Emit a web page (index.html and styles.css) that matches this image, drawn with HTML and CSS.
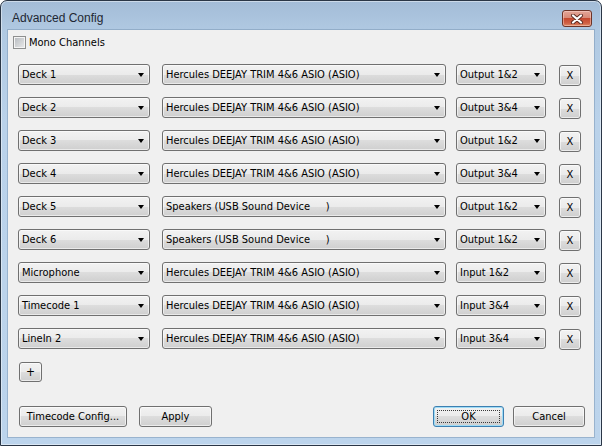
FILE: index.html
```html
<!DOCTYPE html>
<html lang="en">
<head>
    <meta charset="UTF-8">
    <title>Advanced Config</title>
    <link rel="stylesheet" href="styles.css">
</head>
<body>
    <div class="window">
        <div class="titlebar">
            <div class="title">Advanced Config</div>
            <div class="close-btn">
                <svg width="14" height="10" viewBox="0 0 14 10">
                    <path d="M3 1.5 L11 8.5 M11 1.5 L3 8.5" stroke="#5a2a22" stroke-width="4" stroke-linecap="round"/>
                    <path d="M3 1.5 L11 8.5 M11 1.5 L3 8.5" stroke="#ffffff" stroke-width="2.2" stroke-linecap="round"/>
                </svg>
            </div>
        </div>

        <div class="client">
            <label class="check-row">
                <span class="checkbox"></span>
                <span>Mono Channels</span>
            </label>

            <div class="rows">
                <div class="row">
                    <div class="combo combo-name"><span>Deck 1</span><i class="arrow"></i></div>
                    <div class="combo combo-device"><span>Hercules DEEJAY TRIM 4&amp;6 ASIO (ASIO)</span><i class="arrow"></i></div>
                    <div class="combo combo-channel"><span>Output 1&amp;2</span><i class="arrow"></i></div>
                    <div class="btn btn-x">X</div>
                </div>
                <div class="row">
                    <div class="combo combo-name"><span>Deck 2</span><i class="arrow"></i></div>
                    <div class="combo combo-device"><span>Hercules DEEJAY TRIM 4&amp;6 ASIO (ASIO)</span><i class="arrow"></i></div>
                    <div class="combo combo-channel"><span>Output 3&amp;4</span><i class="arrow"></i></div>
                    <div class="btn btn-x">X</div>
                </div>
                <div class="row">
                    <div class="combo combo-name"><span>Deck 3</span><i class="arrow"></i></div>
                    <div class="combo combo-device"><span>Hercules DEEJAY TRIM 4&amp;6 ASIO (ASIO)</span><i class="arrow"></i></div>
                    <div class="combo combo-channel"><span>Output 1&amp;2</span><i class="arrow"></i></div>
                    <div class="btn btn-x">X</div>
                </div>
                <div class="row">
                    <div class="combo combo-name"><span>Deck 4</span><i class="arrow"></i></div>
                    <div class="combo combo-device"><span>Hercules DEEJAY TRIM 4&amp;6 ASIO (ASIO)</span><i class="arrow"></i></div>
                    <div class="combo combo-channel"><span>Output 3&amp;4</span><i class="arrow"></i></div>
                    <div class="btn btn-x">X</div>
                </div>
                <div class="row">
                    <div class="combo combo-name"><span>Deck 5</span><i class="arrow"></i></div>
                    <div class="combo combo-device"><span>Speakers (USB Sound Device     )</span><i class="arrow"></i></div>
                    <div class="combo combo-channel"><span>Output 1&amp;2</span><i class="arrow"></i></div>
                    <div class="btn btn-x">X</div>
                </div>
                <div class="row">
                    <div class="combo combo-name"><span>Deck 6</span><i class="arrow"></i></div>
                    <div class="combo combo-device"><span>Speakers (USB Sound Device     )</span><i class="arrow"></i></div>
                    <div class="combo combo-channel"><span>Output 1&amp;2</span><i class="arrow"></i></div>
                    <div class="btn btn-x">X</div>
                </div>
                <div class="row">
                    <div class="combo combo-name"><span>Microphone</span><i class="arrow"></i></div>
                    <div class="combo combo-device"><span>Hercules DEEJAY TRIM 4&amp;6 ASIO (ASIO)</span><i class="arrow"></i></div>
                    <div class="combo combo-channel"><span>Input 1&amp;2</span><i class="arrow"></i></div>
                    <div class="btn btn-x">X</div>
                </div>
                <div class="row">
                    <div class="combo combo-name"><span>Timecode 1</span><i class="arrow"></i></div>
                    <div class="combo combo-device"><span>Hercules DEEJAY TRIM 4&amp;6 ASIO (ASIO)</span><i class="arrow"></i></div>
                    <div class="combo combo-channel"><span>Input 3&amp;4</span><i class="arrow"></i></div>
                    <div class="btn btn-x">X</div>
                </div>
                <div class="row">
                    <div class="combo combo-name"><span>LineIn 2</span><i class="arrow"></i></div>
                    <div class="combo combo-device"><span>Hercules DEEJAY TRIM 4&amp;6 ASIO (ASIO)</span><i class="arrow"></i></div>
                    <div class="combo combo-channel"><span>Input 3&amp;4</span><i class="arrow"></i></div>
                    <div class="btn btn-x">X</div>
                </div>
            </div>

            <div class="btn btn-add">+</div>

            <div class="footer">
                <div class="footer-group">
                    <div class="btn btn-timecode">Timecode Config...</div>
                    <div class="btn btn-apply">Apply</div>
                </div>
                <div class="footer-group footer-right">
                    <div class="btn btn-ok">OK</div>
                    <div class="btn btn-cancel">Cancel</div>
                </div>
            </div>
        </div>
    </div>
</body>
</html>
```

FILE: styles.css
```css
* {
    margin: 0;
    padding: 0;
    box-sizing: border-box;
}

body {
    width: 602px;
    height: 446px;
    overflow: hidden;
    background: #ffffff;
    font-family: 'DejaVu Sans Condensed', 'Liberation Sans', sans-serif;
    font-stretch: condensed;
    font-size: 11px;
    color: #000000;
}

/* window frame */
.window {
    width: 602px;
    height: 446px;
    display: flex;
    flex-direction: column;
    border: 1px solid #2a3646;
    border-radius: 7px 7px 0 0;
    background: linear-gradient(#a3bcd7 0, #b0c9e2 30px, #bad2ea 120px, #bcd4ec 100%);
    box-shadow: inset 0 0 0 1px rgba(255, 255, 255, 0.45);
}

.titlebar {
    height: 29px;
    display: flex;
    align-items: flex-start;
    justify-content: space-between;
    padding: 9px 9px 0 11px;
}

.title {
    font-family: 'Liberation Sans', Arial, sans-serif;
    font-stretch: normal;
    font-size: 12px;
    line-height: 17px;
    color: #1e2733;
}

.close-btn {
    width: 30px;
    height: 17px;
    display: flex;
    align-items: center;
    justify-content: center;
    border: 1px solid #6c3327;
    border-radius: 3px;
    background: linear-gradient(#e3a597 0, #d88a78 45%, #c5492f 50%, #cf5f43 80%, #dd8a66 100%);
    box-shadow: inset 0 0 0 1px rgba(255, 225, 215, 0.45);
}

/* client area */
.client {
    flex: 1;
    margin: 0 7px 8px 7px;
    background: #f0f0f0;
    box-shadow: 0 0 0 1px rgba(110, 140, 170, 0.45);
    display: flex;
    flex-direction: column;
    padding-top: 6px;
}

.check-row {
    display: flex;
    align-items: center;
    gap: 3px;
    padding-left: 5px;
    height: 13px;
}

.checkbox {
    width: 13px;
    height: 13px;
    border: 1px solid #8e8f8f;
    background: linear-gradient(135deg, #b5b9be, #ebebeb);
    box-shadow: inset 0 0 0 1px #f4f4f4;
}

.rows {
    display: flex;
    flex-direction: column;
    gap: 12px;
    margin-top: 15px;
    padding-left: 10px;
}

.row {
    display: flex;
    align-items: flex-start;
    height: 21px;
}

/* combo boxes */
.combo {
    height: 21px;
    display: flex;
    align-items: center;
    justify-content: space-between;
    padding: 0 5px 0 3px;
    border: 1px solid #707070;
    border-radius: 3px;
    background: linear-gradient(#f2f2f2 0, #ebebeb 50%, #dddddd 50%, #cfcfcf 100%);
    box-shadow: inset 0 0 0 1px rgba(255, 255, 255, 0.55);
    white-space: pre;
}

.arrow {
    width: 0;
    height: 0;
    border-left: 3.5px solid transparent;
    border-right: 3.5px solid transparent;
    border-top: 4px solid #000000;
}

.combo-name {
    width: 132px;
}

.combo-device {
    width: 284px;
    margin-left: 12px;
}

.combo-channel {
    width: 90px;
    margin-left: 10px;
}

/* buttons */
.btn {
    height: 21px;
    display: flex;
    align-items: center;
    justify-content: center;
    border: 1px solid #707070;
    border-radius: 3px;
    background: linear-gradient(#f2f2f2 0, #ebebeb 50%, #dddddd 50%, #cfcfcf 100%);
    box-shadow: inset 0 0 0 1px rgba(255, 255, 255, 0.6);
}

.btn-x {
    width: 22px;
    margin-left: 13px;
    margin-top: 1px;
}

.btn-add {
    width: 23px;
    height: 20px;
    margin: 13px 0 0 11px;
    font-size: 12px;
}

.footer {
    display: flex;
    justify-content: space-between;
    margin-top: 24px;
    padding: 0 9px 0 11px;
}

.footer-group {
    display: flex;
    gap: 12px;
}

.footer-right {
    gap: 9px;
}

.btn-timecode {
    width: 108px;
}

.btn-apply {
    width: 73px;
}

.btn-ok {
    width: 71px;
    position: relative;
    border-color: #3c7fb1;
    box-shadow: inset 0 0 0 1px #9fdcf6;
}

.btn-ok::after {
    content: '';
    position: absolute;
    top: 3px;
    left: 3px;
    right: 3px;
    bottom: 3px;
    border: 1px dotted #3a3a3a;
}

.btn-cancel {
    width: 72px;
}
```
